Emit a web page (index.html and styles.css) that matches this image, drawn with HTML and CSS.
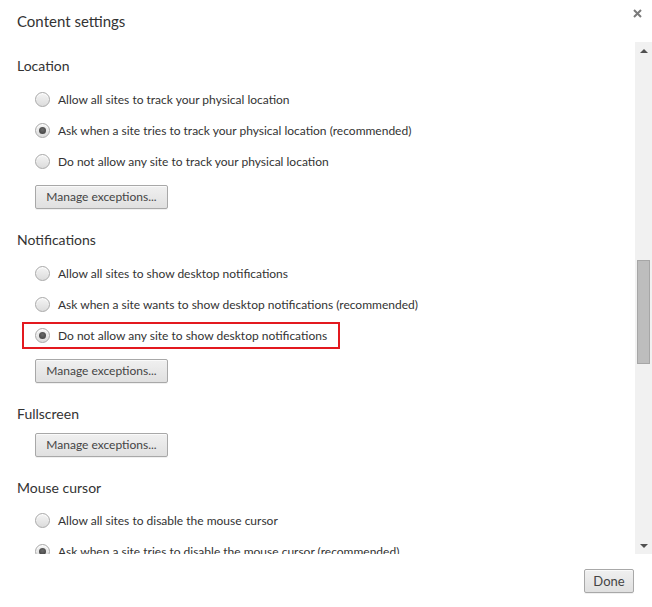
FILE: index.html
```html
<!DOCTYPE html>
<html>
<head>
<meta charset="utf-8">
<link rel="stylesheet" href="styles.css">
</head>
<body>
<div class="dialog">
  <div class="header">
    <h1 class="title">Content settings</h1>
    <button class="close" aria-label="Close">
      <svg width="9" height="9" viewBox="0 0 9 9"><path d="M1 1 L8 8 M8 1 L1 8" stroke="#7a7a7a" stroke-width="2"/></svg>
    </button>
  </div>
  <div class="body">
    <div class="content">
      <section class="section">
        <h3 class="heading">Location</h3>
        <div class="options">
          <label class="row"><span class="radio"></span><span class="label">Allow all sites to track your physical location</span></label>
          <label class="row"><span class="radio checked"></span><span class="label">Ask when a site tries to track your physical location (recommended)</span></label>
          <label class="row"><span class="radio"></span><span class="label">Do not allow any site to track your physical location</span></label>
        </div>
        <button class="btn manage">Manage exceptions...</button>
      </section>
      <section class="section">
        <h3 class="heading">Notifications</h3>
        <div class="options">
          <label class="row"><span class="radio"></span><span class="label">Allow all sites to show desktop notifications</span></label>
          <label class="row"><span class="radio"></span><span class="label">Ask when a site wants to show desktop notifications (recommended)</span></label>
          <label class="row highlight"><span class="radio checked"></span><span class="label">Do not allow any site to show desktop notifications</span></label>
        </div>
        <button class="btn manage">Manage exceptions...</button>
      </section>
      <section class="section">
        <h3 class="heading">Fullscreen</h3>
        <button class="btn manage solo">Manage exceptions...</button>
      </section>
      <section class="section">
        <h3 class="heading tight">Mouse cursor</h3>
        <div class="options">
          <label class="row"><span class="radio"></span><span class="label">Allow all sites to disable the mouse cursor</span></label>
          <label class="row"><span class="radio checked"></span><span class="label">Ask when a site tries to disable the mouse cursor (recommended)</span></label>
        </div>
      </section>
    </div>
    <div class="scrollbar">
      <div class="arrow up"></div>
      <div class="track"><div class="thumb"></div></div>
      <div class="arrow down"></div>
    </div>
  </div>
  <div class="footer">
    <button class="btn done">Done</button>
  </div>
</div>
</body>
</html>
```
FILE: styles.css
```css
* { box-sizing: border-box; }
html, body { margin: 0; padding: 0; background: #fff; }
body {
  font-family: Lato, "Open Sans", sans-serif;
  color: #333;
  font-size: 12px;
}
.dialog {
  width: 652px;
  height: 607px;
  display: flex;
  flex-direction: column;
  background: #fff;
}
.header {
  height: 42px;
  flex: none;
  display: flex;
  justify-content: space-between;
  align-items: flex-start;
  padding: 0 10px 0 17px;
}
.title {
  margin: 0;
  font-size: 15px;
  font-weight: normal;
  line-height: 20px;
  padding-top: 11px;
  color: #333;
}
.close {
  border: 0;
  background: none;
  padding: 0;
  margin-top: 9px;
  width: 9px;
  height: 9px;
  display: flex;
}
.body {
  height: 512px;
  flex: none;
  display: flex;
}
.content {
  flex: 1;
  overflow: hidden;
  padding: 14px 0 0 17px;
}
.section { margin-bottom: 21px; }
.heading {
  margin: 0 0 8px 0;
  font-size: 14px;
  font-weight: normal;
  line-height: 20px;
  color: #333;
}
.heading.tight { margin-bottom: 7px; }
.options { display: flex; flex-direction: column; padding-left: 18px; }
.row {
  height: 31px;
  display: flex;
  align-items: center;
  gap: 8px;
  align-self: flex-start;
  position: relative;
}
.radio {
  width: 15px;
  height: 15px;
  border-radius: 50%;
  border: 1px solid #a9a9a9;
  background: linear-gradient(#f4f4f4, #dcdcdc);
  box-shadow: inset 0 1px 1px #fff;
  display: flex;
  align-items: center;
  justify-content: center;
  flex: none;
}
.radio.checked::after {
  content: "";
  width: 7px;
  height: 7px;
  border-radius: 50%;
  background: radial-gradient(circle at 50% 40%, #6a6a6a, #3a3a3a);
}
.label { line-height: 16px; color: #333; }
.highlight::before {
  content: "";
  position: absolute;
  left: -13px;
  right: -13px;
  top: 2px;
  bottom: 2px;
  border: 2px solid #e3191f;
}
.btn {
  font-family: Lato, "Open Sans", sans-serif;
  font-size: 12px;
  color: #444;
  height: 24px;
  border: 1px solid #a8a8a8;
  border-radius: 2px;
  background: linear-gradient(#f0f0f0, #e0e0e0);
  box-shadow: inset 0 1px 0 #fafafa, 0 1px 0 rgba(0,0,0,0.06);
  padding: 0 10px;
  line-height: 20px;
}
.manage {
  display: block;
  margin: 8px 0 0 18px;
  width: 133px;
}
.manage.solo { margin-top: 9px; }
.scrollbar {
  width: 17px;
  flex: none;
  background: #f1f1f1;
  display: flex;
  flex-direction: column;
  align-items: center;
}
.arrow { height: 17px; width: 17px; display: flex; align-items: center; justify-content: center; flex: none; }
.arrow::after {
  content: "";
  width: 0;
  height: 0;
  border-left: 4px solid transparent;
  border-right: 4px solid transparent;
}
.arrow.up::after { border-bottom: 4px solid #505050; }
.arrow.down::after { border-top: 4px solid #505050; }
.track { flex: 1; width: 17px; padding-top: 201px; }
.thumb {
  margin-left: 2px;
  width: 13px;
  height: 104px;
  background: #bdbdbd;
  border: 1px solid #a6a6a6;
}
.footer {
  flex: 1;
  display: flex;
  justify-content: flex-end;
  align-items: flex-start;
  padding: 15px 18px 0 0;
}
.done { width: 50px; padding: 0; font-size: 13px; }
```
